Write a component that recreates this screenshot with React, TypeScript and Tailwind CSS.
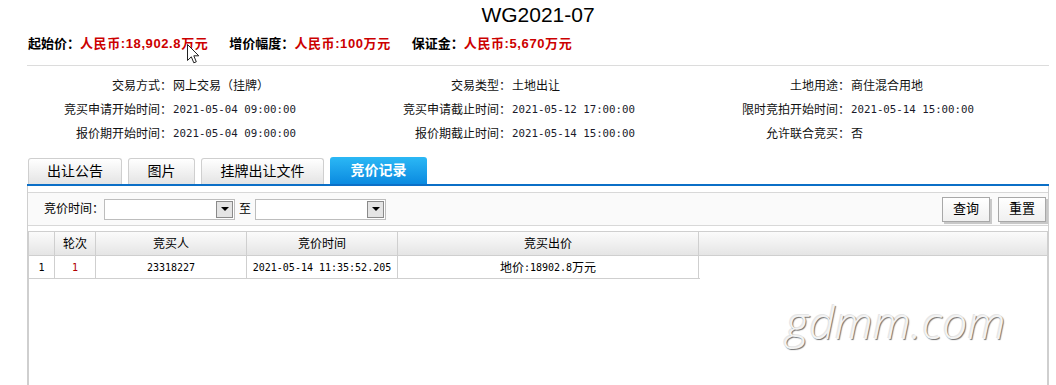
const INFO = [
  [
    { label: "交易方式：", value: "网上交易（挂牌）" },
    { label: "交易类型：", value: "土地出让" },
    { label: "土地用途：", value: "商住混合用地" },
  ],
  [
    { label: "竞买申请开始时间：", value: "2021-05-04 09:00:00", mono: true },
    { label: "竞买申请截止时间：", value: "2021-05-12 17:00:00", mono: true },
    { label: "限时竞拍开始时间：", value: "2021-05-14 15:00:00", mono: true },
  ],
  [
    { label: "报价期开始时间：", value: "2021-05-04 09:00:00", mono: true },
    { label: "报价期截止时间：", value: "2021-05-14 15:00:00", mono: true },
    { label: "允许联合竞买：", value: "否" },
  ],
];

const TABS = [
  { name: "出让公告", w: "w-[94px]" },
  { name: "图片", w: "w-[67px]" },
  { name: "挂牌出让文件", w: "w-[123px]" },
];

const PRICES = [
  { label: "起始价：", value: "人民币:18,902.8万元" },
  { label: "增价幅度：", value: "人民币:100万元" },
  { label: "保证金：", value: "人民币:5,670万元" },
];

function Select() {
  return (
    <div className="flex h-[21px] w-[131px] shrink-0 items-center justify-end border border-[#bdbdbd] bg-white pr-px">
      <div className="flex h-[17px] w-[17px] items-center justify-center border border-[#8a8a8a] bg-[#e4e4e4]">
        <span className="h-0 w-0 border-x-[4px] border-t-[4px] border-x-transparent border-t-black" />
      </div>
    </div>
  );
}

function Btn({ text }: { text: string }) {
  return (
    <button className="h-[25px] w-[48px] border border-[#a8a8a8] bg-gradient-to-b from-white to-[#f0f0f0] text-[13px] text-black shadow-[2px_2px_0_#c8c8c8]">
      {text}
    </button>
  );
}

export default function App() {
  return (
    <div className="relative h-[385px] w-[1056px] overflow-hidden bg-white font-['Liberation_Sans','Noto_Sans_CJK_SC',sans-serif] text-black">
      <div className="ml-[27px] flex h-full w-[1022px] flex-col">
        <h1 className="h-[30px] text-center text-[21px] leading-[30px] font-normal">WG2021-07</h1>

        <div className="mt-[4px] flex h-[20px] items-center pl-px text-[13px] font-bold whitespace-nowrap">
          {PRICES.map((p, i) => (
            <span key={p.label} className={i > 0 ? "ml-[21px]" : ""}>
              {p.label}
              <span className="tracking-[0.6px] text-[#cc0000]">{p.value}</span>
            </span>
          ))}
        </div>

        <div className="mt-[11px] h-px bg-[#dcdcdc]" />

        <div className="mt-[8px] grid grid-cols-[145px_194px_145px_194px_145px_1fr] text-[12px]">
          {INFO.map((row) =>
            row.map((c) => [
              <div key={c.label} className="flex h-[24px] items-center justify-end text-[#111]">
                {c.label}
              </div>,
              <div
                key={c.label + "v"}
                className={
                  "flex h-[24px] items-center pl-[1px] whitespace-nowrap " +
                  (c.mono ? "font-['DejaVu_Sans_Mono',monospace] text-[10.75px] text-[#1a1a2a]" : "text-[#111]")
                }
              >
                {c.value}
              </div>,
            ])
          )}
        </div>

        <div className="mt-[11px] flex h-[29px] items-end gap-[6px] border-b-2 border-[#0b6fc7] pl-px">
          {TABS.map((t) => (
            <div
              key={t.name}
              className={`${t.w} flex h-[26px] items-center justify-center rounded-t-[3px] border border-b-0 border-[#cfcfcf] bg-gradient-to-b from-white to-[#e4e4e4] text-[14px]`}
            >
              {t.name}
            </div>
          ))}
          <div className="flex h-[27px] w-[97px] items-center justify-center rounded-t-[3px] bg-gradient-to-b from-[#2bb8f5] to-[#0a8ae0] text-[14px] font-bold text-white">
            竞价记录
          </div>
        </div>

        <div className="flex flex-1 flex-col border-x border-[#cfcfcf]">
          <div className="mt-[6px] flex h-[34px] items-center border-y border-[#d8d8d8] bg-[#fafafa] pl-[16px] pr-[2px] text-[12px] whitespace-nowrap">
            <span className="w-[60px] shrink-0">竞价时间：</span>
            <Select />
            <span className="mx-[4px]">至</span>
            <Select />
            <div className="ml-auto flex gap-[8px]">
              <Btn text="查询" />
              <Btn text="重置" />
            </div>
          </div>

          <div className="mt-[5px] flex-1 border-x border-t border-[#cfcfcf] text-[12px]">
            <div className="grid h-[24px] grid-cols-[26px_41px_151px_151px_301px_1fr] border-b border-[#cfcfcf] bg-gradient-to-b from-[#fbfbfb] to-[#e5e5e5]">
              <div className="border-r border-[#cfcfcf]" />
              <div className="flex items-center justify-center border-r border-[#cfcfcf]">轮次</div>
              <div className="flex items-center justify-center border-r border-[#cfcfcf]">竞买人</div>
              <div className="flex items-center justify-center border-r border-[#cfcfcf]">竞价时间</div>
              <div className="flex items-center justify-center border-r border-[#cfcfcf]">竞买出价</div>
              <div />
            </div>
            <div className="grid h-[23px] w-[671px] grid-cols-[26px_41px_151px_151px_301px] border-b border-[#cfcfcf] font-['DejaVu_Sans_Mono',monospace] text-[10px]">
              <div className="flex items-center justify-center border-r border-[#cfcfcf]">1</div>
              <div className="flex items-center justify-center border-r border-[#cfcfcf] text-[#b00000]">1</div>
              <div className="flex items-center justify-center border-r border-[#cfcfcf]">23318227</div>
              <div className="flex items-center justify-center border-r border-[#cfcfcf]">2021-05-14 11:35:52.205</div>
              <div className="flex items-center justify-center border-r border-[#cfcfcf]">
                <span className="font-['Noto_Sans_CJK_SC',sans-serif] text-[12px]">地价</span>:18902.8
                <span className="font-['Noto_Sans_CJK_SC',sans-serif] text-[12px]">万元</span>
              </div>
            </div>
          </div>
        </div>
      </div>

      {/* watermark */}
      <div className="absolute left-[786px] top-[289px] font-['Open_Sans',sans-serif] text-[44px] font-light italic tracking-[0.6px] text-[#f3f3f3] [text-shadow:1px_1px_1px_#6f6f6f,-1px_-1px_0_#e6e6e6]">
        gdmm.com
      </div>

      {/* mouse pointer */}
      <svg className="absolute left-[187px] top-[44px]" width="13" height="21" viewBox="0 0 13 21">
        <path d="M0.5 0.5 L0.5 16.5 L4.3 12.8 L6.8 18.8 L9.3 17.8 L6.8 11.8 L11.8 11.8 Z" fill="white" stroke="#222" strokeWidth="1" />
      </svg>
    </div>
  );
}
